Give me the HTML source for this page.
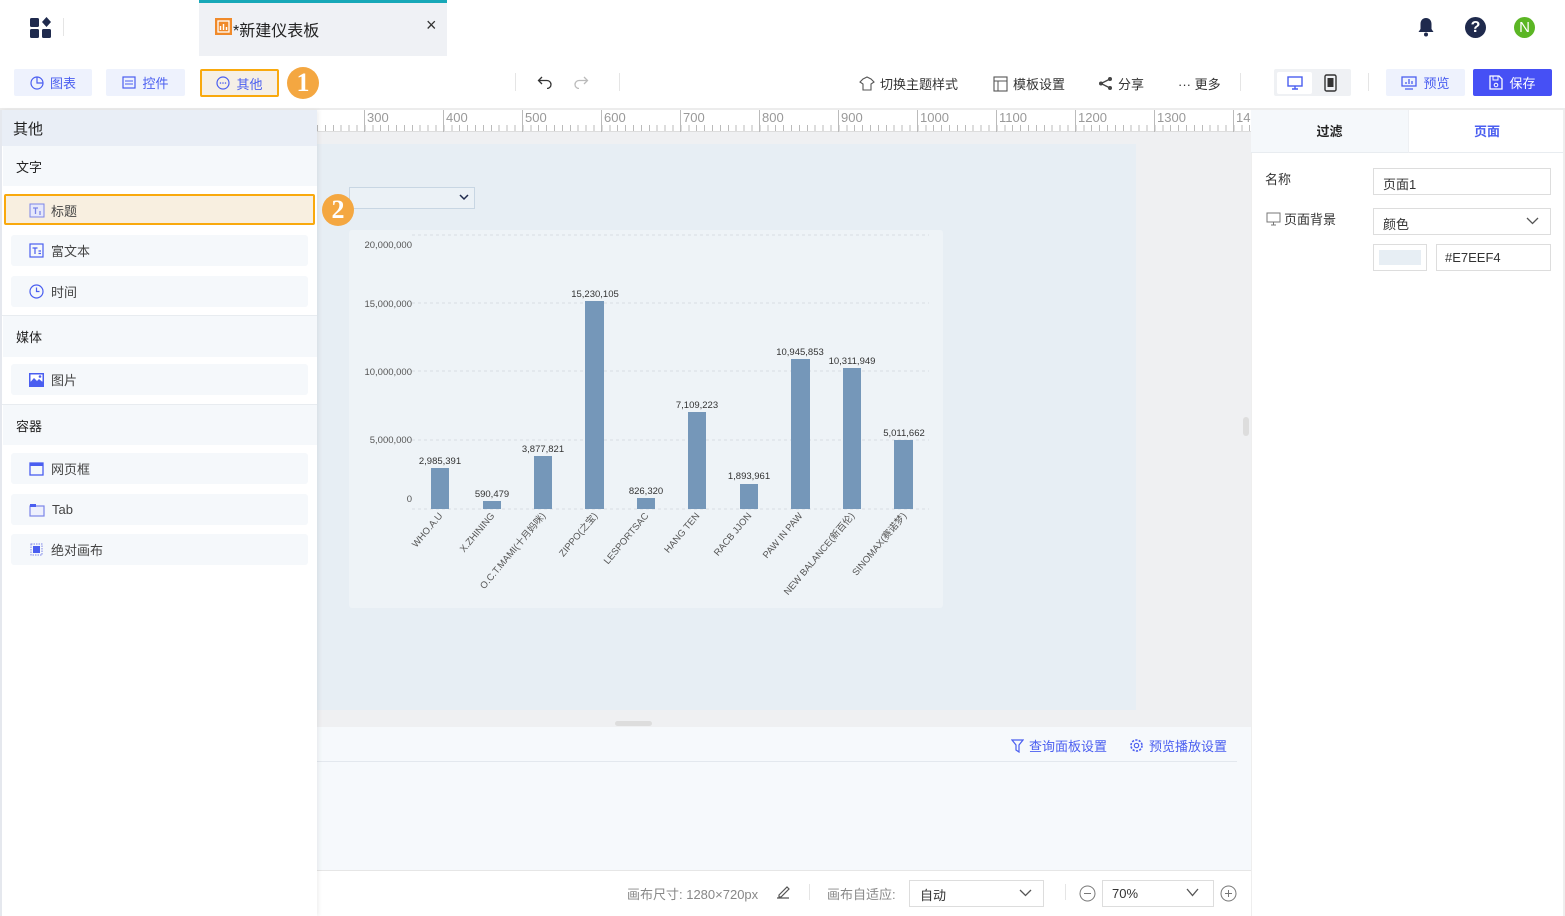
<!DOCTYPE html>
<html><head><meta charset="utf-8">
<style>
*{box-sizing:border-box;margin:0;padding:0}
body{width:1565px;height:916px;position:relative;overflow:hidden;background:#fff;font-family:"Liberation Sans","Noto Sans CJK SC",sans-serif;font-size:13px;color:#333}
.a{position:absolute}
.btn{position:absolute;top:69px;height:27px;background:#eef2fd;border-radius:2px;color:#4a5ef0;font-size:13px;display:flex;align-items:center;justify-content:center;gap:6px}
.num{position:absolute;width:32px;height:32px;border-radius:50%;background:#f4a741;color:#fff;font-family:"Liberation Serif",serif;font-weight:bold;font-size:26px;text-align:center;line-height:32px}
.item{position:absolute;left:11px;width:297px;height:31px;background:#f5f8fb;border-radius:3px;display:flex;align-items:center;padding-left:18px;gap:7px;font-size:13px;color:#444}
.sec{position:absolute;left:3px;width:314px;background:#f5f8fb;padding-left:13px;font-size:13px;color:#222;display:flex;align-items:center}
.tb{position:absolute;top:74px;font-size:13px;color:#333;display:flex;align-items:center;gap:5px}
</style></head><body>
<!-- top bar -->
<svg class="a" style="left:30px;top:17px" width="22" height="22" viewBox="0 0 22 22"><rect x="0" y="1" width="9" height="9" rx="1.5" fill="#1f2a4d"/><rect x="0" y="12" width="9" height="9" rx="1.5" fill="#1f2a4d"/><rect x="12" y="12" width="9" height="9" rx="1.5" fill="#1f2a4d"/><path d="M16.5 0 L21 5 L16.5 10 L12 5Z" fill="#1f2a4d"/></svg>
<div class="a" style="left:63px;top:18px;width:1px;height:18px;background:#e5e5e5"></div>
<div class="a" style="left:199px;top:0;width:248px;height:56px;background:#eff1f5;border-top:3px solid #17a8b8"></div>
<svg class="a" style="left:215px;top:18px" width="17" height="17" viewBox="0 0 17 17"><rect width="17" height="17" fill="#f08a2a"/><rect x="3" y="3" width="11" height="11" fill="none" stroke="#fff" stroke-width="1.3"/><path d="M5.5 12V8M8.5 12V6M11.5 12V9" stroke="#fff" stroke-width="1.4"/></svg>
<div class="a" style="left:233px;top:17px;font-size:16px;color:#222">*新建仪表板</div>
<div class="a" style="left:426px;top:15px;font-size:18px;color:#333">×</div>
<svg class="a" style="left:1417px;top:17px" width="18" height="20" viewBox="0 0 18 20"><path d="M9 1C5.5 1 3.5 3.5 3.5 7v5L1.5 15h15l-2-3V7C14.5 3.5 12.5 1 9 1Z" fill="#1f2a4d"/><circle cx="9" cy="17.5" r="2" fill="#1f2a4d"/></svg>
<div class="a" style="left:1465px;top:17px;width:21px;height:21px;border-radius:50%;background:#1f2a4d;color:#fff;font-weight:bold;font-size:16px;text-align:center;line-height:21px">?</div>
<div class="a" style="left:1514px;top:17px;width:21px;height:21px;border-radius:50%;background:#5bb624;color:#fff;font-size:15px;text-align:center;line-height:21px">N</div>
<!-- toolbar -->
<div class="btn" style="left:14px;width:78px"><svg width="14" height="14"><circle cx="7" cy="7" r="6" fill="none" stroke="#4a5ef0" stroke-width="1.2"/><path d="M7 1V7H13" fill="none" stroke="#4a5ef0" stroke-width="1.2"/></svg>图表</div>
<div class="btn" style="left:106px;width:79px"><svg width="14" height="13"><rect x="1" y="1" width="12" height="11" fill="none" stroke="#4a5ef0" stroke-width="1.2"/><path d="M3 5H11M3 8H11" stroke="#4a5ef0"/></svg>控件</div>
<div class="btn" style="left:200px;width:79px;height:28px;background:#f5efe6;border:2px solid #f9a90d"><svg width="14" height="14"><circle cx="7" cy="7" r="6" fill="none" stroke="#4a5ef0" stroke-width="1.2"/><circle cx="4.5" cy="7" r=".8" fill="#4a5ef0"/><circle cx="7" cy="7" r=".8" fill="#4a5ef0"/><circle cx="9.5" cy="7" r=".8" fill="#4a5ef0"/></svg>其他</div>
<div class="num" style="left:287px;top:67px">1</div>
<div class="a" style="left:515px;top:73px;width:1px;height:18px;background:#e5e5e5"></div>
<svg class="a" style="left:537px;top:75px" width="16" height="14"><path d="M5 2L1.5 5.5 5 9M1.5 5.5H10a4 4 0 0 1 0 8" fill="none" stroke="#333" stroke-width="1.3"/></svg>
<svg class="a" style="left:573px;top:75px" width="16" height="14"><path d="M11 2L14.5 5.5 11 9M14.5 5.5H6a4 4 0 0 0 0 8" fill="none" stroke="#bbb" stroke-width="1.3"/></svg>
<div class="a" style="left:619px;top:73px;width:1px;height:18px;background:#e5e5e5"></div>
<div class="tb" style="left:859px"><svg width="16" height="16"><path d="M4 3L8 1 12 3 15 6 12 8V14H4V8L1 6Z" fill="none" stroke="#555" stroke-width="1.1"/></svg>切换主题样式</div>
<div class="tb" style="left:993px"><svg width="15" height="16"><rect x="1" y="1" width="13" height="14" fill="none" stroke="#555" stroke-width="1.1"/><path d="M1 5H14M5 5V15" stroke="#555"/></svg>模板设置</div>
<div class="tb" style="left:1098px"><svg width="15" height="15"><circle cx="12" cy="3" r="2" fill="#444"/><circle cx="3" cy="7.5" r="2" fill="#444"/><circle cx="12" cy="12" r="2" fill="#444"/><path d="M12 3L3 7.5 12 12" stroke="#444" stroke-width="1.3" fill="none"/></svg>分享</div>
<div class="tb" style="left:1178px">··· 更多</div>
<div class="a" style="left:1240px;top:73px;width:1px;height:18px;background:#e5e5e5"></div>
<div class="a" style="left:1274px;top:69px;width:77px;height:27px;background:#eff1f4;border-radius:2px"></div>
<div class="a" style="left:1277px;top:72px;width:35px;height:22px;background:#fff;border-radius:2px"></div>
<svg class="a" style="left:1287px;top:76px" width="16" height="14"><rect x="1" y="1" width="14" height="9" fill="none" stroke="#4a5ef0" stroke-width="1.4"/><path d="M5 13H11M8 10V13" stroke="#4a5ef0" stroke-width="1.4"/></svg>
<svg class="a" style="left:1324px;top:74px" width="13" height="18"><rect x="1" y="1" width="11" height="16" rx="1.5" fill="none" stroke="#333" stroke-width="1.4"/><rect x="3.5" y="4" width="6" height="9" fill="#333"/></svg>
<div class="a" style="left:1368px;top:73px;width:1px;height:18px;background:#e5e5e5"></div>
<div class="btn" style="left:1386px;width:79px"><svg width="16" height="14"><rect x="1" y="1" width="14" height="9" fill="none" stroke="#4a5ef0" stroke-width="1.3"/><path d="M5 8V6M8 8V3M11 8V5M4 13H12" stroke="#4a5ef0" stroke-width="1.3"/></svg>预览</div>
<div class="btn" style="left:1473px;width:79px;background:#4650f5;color:#fff"><svg width="14" height="15"><path d="M1 1H10L13 4V14H1Z" fill="none" stroke="#fff" stroke-width="1.3"/><rect x="4" y="1" width="5" height="4" fill="none" stroke="#fff"/><circle cx="7" cy="10" r="1.8" fill="none" stroke="#fff"/></svg>保存</div>
<div class="a" style="left:0;top:108px;width:1565px;height:2px;background:#ececec"></div>
<!-- canvas area -->
<div class="a" style="left:317px;top:110px;width:934px;height:617px;background:#eff0f2"></div>
<div class="a" style="left:317px;top:110px;width:934px;height:22px;background:#fff;border-bottom:1px solid #ddd;background-image:repeating-linear-gradient(90deg,#bbb 0 1px,transparent 1px 7.9px);background-size:100% 6px;background-position:0 15px;background-repeat:no-repeat;background-origin:border-box"></div>
<div class="a" style="left:317px;top:110px;width:934px;height:22px;font-size:13px;color:#999;font-family:'Liberation Sans Narrow','Liberation Sans',sans-serif">
<div class="a" style="left:47px;top:0;height:22px;border-left:1px solid #bbb;padding-left:2px">300</div>
<div class="a" style="left:126px;top:0;height:22px;border-left:1px solid #bbb;padding-left:2px">400</div>
<div class="a" style="left:205px;top:0;height:22px;border-left:1px solid #bbb;padding-left:2px">500</div>
<div class="a" style="left:284px;top:0;height:22px;border-left:1px solid #bbb;padding-left:2px">600</div>
<div class="a" style="left:363px;top:0;height:22px;border-left:1px solid #bbb;padding-left:2px">700</div>
<div class="a" style="left:442px;top:0;height:22px;border-left:1px solid #bbb;padding-left:2px">800</div>
<div class="a" style="left:521px;top:0;height:22px;border-left:1px solid #bbb;padding-left:2px">900</div>
<div class="a" style="left:600px;top:0;height:22px;border-left:1px solid #bbb;padding-left:2px">1000</div>
<div class="a" style="left:679px;top:0;height:22px;border-left:1px solid #bbb;padding-left:2px">1100</div>
<div class="a" style="left:758px;top:0;height:22px;border-left:1px solid #bbb;padding-left:2px">1200</div>
<div class="a" style="left:837px;top:0;height:22px;border-left:1px solid #bbb;padding-left:2px">1300</div>
<div class="a" style="left:916px;top:0;height:22px;border-left:1px solid #bbb;padding-left:2px">14</div>
</div>
<div class="a" style="left:317px;top:144px;width:819px;height:566px;background:#e7eef4"></div>
<div class="a" style="left:349px;top:187px;width:126px;height:22px;border:1px solid #c8d6e3;background:#ebf1f6"></div>
<svg class="a" style="left:459px;top:194px" width="10" height="7"><path d="M1 1L5 5 9 1" fill="none" stroke="#1f2a4d" stroke-width="1.5"/></svg>
<div class="a" style="left:349px;top:230px;width:594px;height:378px;background:#eef3f7;border-radius:3px"></div>
<svg class="a" style="left:349px;top:230px" width="594" height="378" font-family="Liberation Sans, Noto Sans CJK SC, sans-serif">
<g stroke="#d8dde3" stroke-dasharray="3,3"><line x1="63" y1="5" x2="580" y2="5"/><line x1="63" y1="73" x2="580" y2="73"/><line x1="63" y1="141" x2="580" y2="141"/><line x1="63" y1="210" x2="580" y2="210"/><line x1="63" y1="279" x2="580" y2="279"/></g>
<g font-size="9.5" fill="#555" text-anchor="end"><text x="63" y="18">20,000,000</text><text x="63" y="77">15,000,000</text><text x="63" y="145">10,000,000</text><text x="63" y="213">5,000,000</text><text x="63" y="272">0</text></g>
<g fill="#7597b9">
<rect x="82" y="238" width="18" height="41"/><rect x="134" y="271" width="18" height="8"/><rect x="185" y="226" width="18" height="53"/><rect x="236" y="71" width="19" height="208"/><rect x="288" y="268" width="18" height="11"/><rect x="339" y="182" width="18" height="97"/><rect x="391" y="254" width="18" height="25"/><rect x="442" y="129" width="19" height="150"/><rect x="494" y="138" width="18" height="141"/><rect x="545" y="210" width="19" height="69"/></g>
<g font-size="9.5" fill="#333" text-anchor="middle"><text x="91" y="234">2,985,391</text><text x="143" y="267">590,479</text><text x="194" y="222">3,877,821</text><text x="246" y="67">15,230,105</text><text x="297" y="264">826,320</text><text x="348" y="178">7,109,223</text><text x="400" y="249">1,893,961</text><text x="451" y="125">10,945,853</text><text x="503" y="134">10,311,949</text><text x="555" y="206">5,011,662</text></g>
<g font-size="9.5" fill="#555" text-anchor="end">
<text transform="translate(94,286) rotate(-50)">WHO.A.U</text>
<text transform="translate(146,286) rotate(-50)">X.ZHINING</text>
<text transform="translate(197,286) rotate(-50)">O.C.T.MAMI(十月妈咪)</text>
<text transform="translate(249,286) rotate(-50)">ZIPPO(之宝)</text>
<text transform="translate(300,286) rotate(-50)">LESPORTSAC</text>
<text transform="translate(351,286) rotate(-50)">HANG TEN</text>
<text transform="translate(403,286) rotate(-50)">RACB JJON</text>
<text transform="translate(454,286) rotate(-50)">PAW IN PAW</text>
<text transform="translate(506,286) rotate(-50)">NEW BALANCE(新百伦)</text>
<text transform="translate(558,286) rotate(-50)">SINOMAX(赛诺梦)</text>
</g></svg>
<div class="a" style="left:615px;top:721px;width:37px;height:5px;border-radius:3px;background:#ddd"></div>
<div class="a" style="left:1243px;top:417px;width:6px;height:19px;border-radius:3px;background:#ddd"></div>
<!-- bottom -->
<div class="a" style="left:317px;top:727px;width:934px;height:143px;background:#f6f9fc"></div>
<div class="a" style="left:317px;top:761px;width:920px;height:1px;background:#e3e8ee"></div>
<div class="a" style="left:1011px;top:736px;font-size:13px;color:#4a5ef0;display:flex;gap:5px;align-items:center"><svg width="13" height="14"><path d="M1 1H12L8 6V13L5 11V6Z" fill="none" stroke="#4a5ef0" stroke-width="1.2"/></svg>查询面板设置</div>
<div class="a" style="left:1129px;top:736px;font-size:13px;color:#4a5ef0;display:flex;gap:5px;align-items:center"><svg width="15" height="15"><circle cx="7.5" cy="7.5" r="5.5" fill="none" stroke="#4a5ef0" stroke-width="1.6" stroke-dasharray="2.2,1.3"/><circle cx="7.5" cy="7.5" r="2.2" fill="none" stroke="#4a5ef0" stroke-width="1.2"/></svg>预览播放设置</div>
<div class="a" style="left:317px;top:870px;width:934px;height:1px;background:#e6e6e6"></div>
<div class="a" style="left:627px;top:884px;font-size:13px;color:#888">画布尺寸: 1280×720px</div>
<svg class="a" style="left:776px;top:884px" width="14" height="15"><path d="M3 11L11 3 13 5 5 13H3Z M1 14H13" fill="none" stroke="#555" stroke-width="1.2"/></svg>
<div class="a" style="left:809px;top:884px;width:1px;height:16px;background:#e5e5e5"></div>
<div class="a" style="left:827px;top:884px;font-size:13px;color:#888">画布自适应:</div>
<div class="a" style="left:909px;top:880px;width:135px;height:27px;border:1px solid #ddd;background:#fff;padding:4px 10px;font-size:13px">自动</div>
<svg class="a" style="left:1019px;top:889px" width="13" height="8"><path d="M1 1L6.5 6.5 12 1" fill="none" stroke="#555" stroke-width="1.3"/></svg>
<div class="a" style="left:1065px;top:884px;width:1px;height:16px;background:#e5e5e5"></div>
<svg class="a" style="left:1079px;top:885px" width="17" height="17"><circle cx="8.5" cy="8.5" r="7.5" fill="none" stroke="#777"/><path d="M5 8.5H12" stroke="#777"/></svg>
<div class="a" style="left:1102px;top:880px;width:112px;height:27px;border:1px solid #ddd;background:#fff;padding:5px 9px;font-size:13px">70%</div>
<svg class="a" style="left:1186px;top:888px" width="13" height="9"><path d="M1 1L6.5 7.5 12 1" fill="none" stroke="#555" stroke-width="1.3"/></svg>
<svg class="a" style="left:1220px;top:885px" width="17" height="17"><circle cx="8.5" cy="8.5" r="7.5" fill="none" stroke="#777"/><path d="M5 8.5H12M8.5 5V12" stroke="#777"/></svg>
<!-- left panel -->
<div class="a" style="left:0;top:110px;width:317px;height:806px;background:#fff;border-left:2px solid #e5e8ee;box-shadow:2px 0 4px rgba(0,0,0,.06)"></div>
<div class="a" style="left:2px;top:110px;width:315px;height:36px;background:#e9eef6;font-size:15px;color:#222;padding:8px 11px">其他</div>
<div class="sec" style="top:146px;height:40px">文字</div>
<div class="a" style="left:4px;top:194px;width:311px;height:31px;background:#f8efe0;border:2px solid #f9a90d;border-radius:2px"></div>
<div class="a" style="left:29px;top:201px;display:flex;gap:6px;align-items:center;font-size:13px;color:#444"><svg width="16" height="15"><rect x="1" y="1" width="14" height="13" fill="#e6e8fb" stroke="#7b85e8"/><path d="M4 5H9M6.5 5V11M10 9H12M10 11H12" stroke="#7b85e8" stroke-width="1.3"/></svg>标题</div>
<div class="num" style="left:322px;top:194px">2</div>
<div class="item" style="top:235px"><svg width="15" height="15"><rect x="1" y="1" width="13" height="13" fill="none" stroke="#4a5ef0" stroke-width="1.2"/><path d="M3.5 5H8.5M6 5V11M9.5 8H12M9.5 10.5H12" stroke="#4a5ef0" stroke-width="1.2"/></svg>富文本</div>
<div class="item" style="top:276px"><svg width="15" height="15"><circle cx="7.5" cy="7.5" r="6.5" fill="none" stroke="#4a5ef0" stroke-width="1.2"/><path d="M7.5 3.5V7.5H10.5" fill="none" stroke="#4a5ef0" stroke-width="1.2"/></svg>时间</div>
<div class="a" style="left:2px;top:315px;width:315px;height:1px;background:#e8ecf0"></div>
<div class="sec" style="top:316px;height:41px">媒体</div>
<div class="item" style="top:364px"><svg width="15" height="14"><rect x="0" y="0" width="15" height="14" fill="#4a5ef0"/><rect x="1.5" y="1.5" width="12" height="7" fill="#fff"/><path d="M1.5 9L5 5 8 8 10 6 13.5 9Z" fill="#4a5ef0"/><circle cx="11" cy="3.5" r="1.3" fill="#4a5ef0"/></svg>图片</div>
<div class="a" style="left:2px;top:404px;width:315px;height:1px;background:#e8ecf0"></div>
<div class="sec" style="top:405px;height:40px">容器</div>
<div class="item" style="top:453px"><svg width="15" height="14"><rect x="1" y="1" width="13" height="12" fill="none" stroke="#4a5ef0" stroke-width="1.3"/><rect x="1" y="1" width="13" height="3" fill="#4a5ef0"/></svg>网页框</div>
<div class="item" style="top:494px"><svg width="16" height="14"><rect x="1" y="3" width="14" height="10" fill="#eef0fd" stroke="#7b85e8" stroke-width="1.2"/><rect x="1" y="1" width="6" height="3" fill="#4a5ef0"/></svg>Tab</div>
<div class="item" style="top:534px"><svg width="15" height="15"><rect x="2" y="2" width="11" height="11" fill="none" stroke="#7b85e8" stroke-dasharray="1.5,1"/><rect x="4" y="4" width="7" height="7" fill="#4a5ef0"/></svg>绝对画布</div>
<!-- right panel -->
<div class="a" style="left:1251px;top:110px;width:314px;height:806px;background:#fff;border-left:1px solid #eee"></div>
<div class="a" style="left:1251px;top:110px;width:157px;height:43px;background:#f5f8fb;border-bottom:1px solid #e8ecf0;font-size:13px;font-weight:bold;color:#222;text-align:center;line-height:43px">过滤</div>
<div class="a" style="left:1408px;top:110px;width:157px;height:43px;border-bottom:1px solid #e8ecf0;border-left:1px solid #eef0f3;font-size:13px;font-weight:bold;color:#4a5ef0;text-align:center;line-height:43px">页面</div>
<div class="a" style="left:1265px;top:169px;font-size:13px;color:#333">名称</div>
<div class="a" style="left:1373px;top:168px;width:178px;height:27px;border:1px solid #ddd;padding:5px 9px;font-size:13px">页面1</div>
<div class="a" style="left:1266px;top:209px;font-size:13px;color:#333;display:flex;align-items:center;gap:3px"><svg width="15" height="14"><rect x="1" y="1" width="13" height="9" fill="none" stroke="#777"/><path d="M5 13H10M7.5 10V13" stroke="#777"/></svg>页面背景</div>
<div class="a" style="left:1373px;top:208px;width:178px;height:27px;border:1px solid #ddd;padding:5px 9px;font-size:13px">颜色</div>
<svg class="a" style="left:1526px;top:217px" width="13" height="8"><path d="M1 1L6.5 6.5 12 1" fill="none" stroke="#555" stroke-width="1.3"/></svg>
<div class="a" style="left:1373px;top:244px;width:54px;height:27px;border:1px solid #ddd;padding:5px 5px"><div style="width:42px;height:15px;background:#e7eef4"></div></div>
<div class="a" style="left:1436px;top:244px;width:115px;height:27px;border:1px solid #ddd;padding:5px 8px;font-size:13px">#E7EEF4</div>
<div class="a" style="left:1563px;top:110px;width:2px;height:806px;background:#eee"></div>
</body></html>
